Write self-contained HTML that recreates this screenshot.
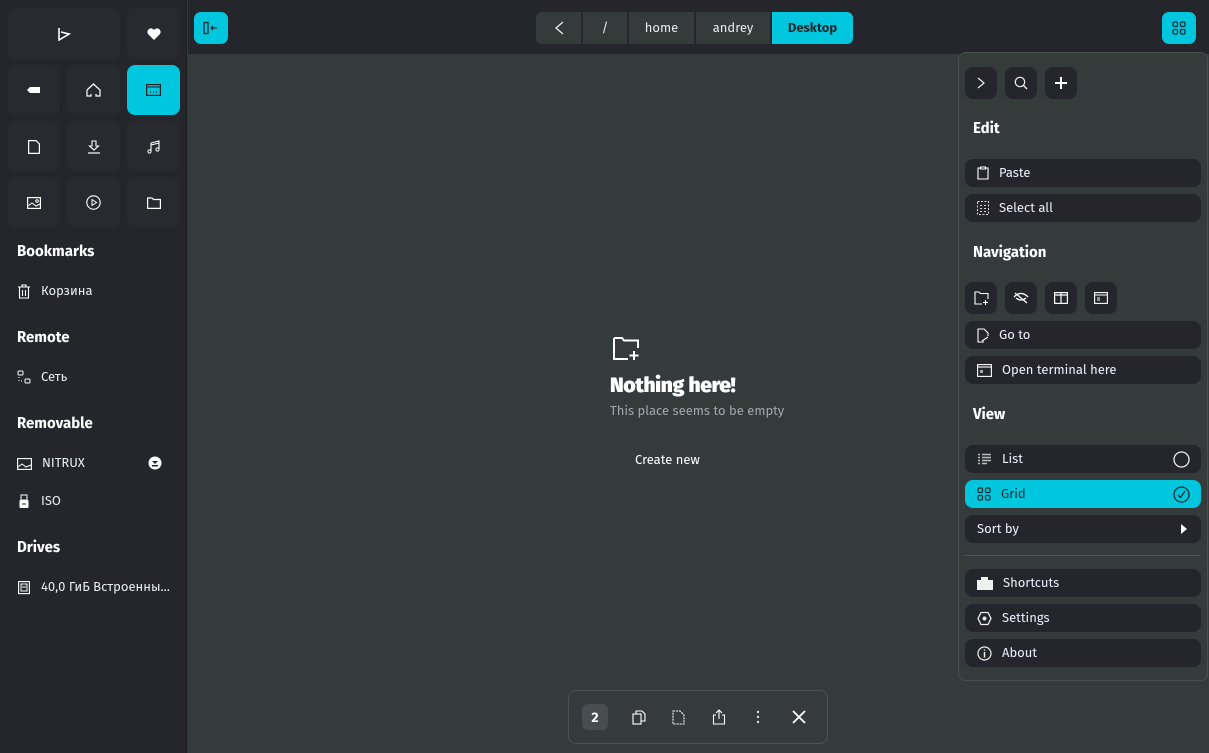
<!DOCTYPE html>
<html><head><meta charset="utf-8"><style>
*{box-sizing:border-box;margin:0;padding:0}
body{width:1209px;height:753px;overflow:hidden;background:#353b3b;font-family:"Fira Sans","Liberation Sans","Noto Sans CJK SC",sans-serif;color:#eef;position:relative;font-size:13px}
.side{position:absolute;left:0;top:0;width:187px;height:753px;background:#25262b;border-right:1px solid #1c1d20}
.tile{position:absolute;background:#292a2f;border-radius:8px;display:flex;align-items:center;justify-content:center}
.tile.on{background:#00c7dd}
svg{display:block}
.h{position:absolute;left:17px;font-weight:bold;font-size:15px;color:#fff}
.it{position:absolute;left:17px;display:flex;align-items:center;gap:10px;font-size:13px;color:#e8eef2}
.top{position:absolute;left:188px;top:0;right:0;height:54px;background:#25262b}
.cbtn{position:absolute;width:34px;height:32px;border-radius:7px;background:#00c7dd;display:flex;align-items:center;justify-content:center}
.crumb{position:absolute;top:12px;height:32px;background:#353b3b;display:flex;align-items:center;justify-content:center;font-size:13px;color:#e6eaec}
.menu{position:absolute;left:958px;top:52px;width:250px;height:629px;background:#353b3b;border:1px solid #4a5050;border-radius:8px}
.sb{position:absolute;width:32px;height:32px;border-radius:8px;background:#25262b;display:flex;align-items:center;justify-content:center}
.mi{position:absolute;left:6px;width:236px;height:28px;border-radius:8px;background:#25262b;display:flex;align-items:center;padding-left:12px;gap:10px;font-size:13px;color:#eef}
.mh{position:absolute;left:14px;font-weight:bold;font-size:15px;color:#fff}
</style></head><body>
<div class="side">
<div class="tile" style="left:8px;top:8px;width:112px;height:52px"><svg width="14" height="14" viewBox="0 0 14 14"><path d="M2 1V13L12 7L4 5" fill="none" stroke="#fff" stroke-width="1.6"/></svg></div>
<div class="tile" style="left:127px;top:8px;width:53px;height:52px"><svg width="14" height="12" viewBox="0 0 14 12"><path d="M7 12L1 6A3 3 0 0 1 7 2A3 3 0 0 1 13 6Z" fill="#fff"/></svg></div>
<div class="tile" style="left:8px;top:65px;width:52px;height:50px"><svg width="14" height="8"><path d="M3 1H13V7H3L0 4Z" fill="#fff"/></svg></div>
<div class="tile" style="left:67px;top:65px;width:53px;height:50px"><svg width="15" height="14"><path d="M1 7L7.5 1L14 7V13H10V11M5 11V13H1V7" fill="none" stroke="#fff" stroke-width="1.2"/></svg></div>
<div class="tile on" style="left:127px;top:65px;width:53px;height:50px"><svg width="15" height="12"><rect x=".6" y=".6" width="13.8" height="10.8" fill="none" stroke="#222" stroke-width="1.2"/><path d="M1 3H14" stroke="#222"/><path d="M4 8H5M7 8H8M10 8H11" stroke="#222" stroke-width="1.5"/></svg></div>
<div class="tile" style="left:8px;top:121px;width:52px;height:51px"><svg width="12" height="14"><path d="M.6.6H8L11.4 4V13.4H.6Z" fill="none" stroke="#fff" stroke-width="1.2"/></svg></div>
<div class="tile" style="left:67px;top:121px;width:53px;height:51px"><svg width="14" height="14"><path d="M5 1H9V6H11.5L7 10L2.5 6H5Z" fill="none" stroke="#fff" stroke-width="1.1"/><path d="M1 13H13" stroke="#fff" stroke-width="1.2"/></svg></div>
<div class="tile" style="left:127px;top:121px;width:53px;height:51px"><svg width="13" height="14"><path d="M4 11V3L12 1V9M4 5L12 3" fill="none" stroke="#fff" stroke-width="1.1"/><circle cx="2.5" cy="11.5" r="1.6" fill="none" stroke="#fff"/><circle cx="10.5" cy="9.5" r="1.6" fill="none" stroke="#fff"/></svg></div>
<div class="tile" style="left:8px;top:177px;width:52px;height:51px"><svg width="14" height="12"><rect x=".6" y=".6" width="12.8" height="10.8" fill="none" stroke="#fff" stroke-width="1.2"/><path d="M1 9L5 6L9 9L13 7" fill="none" stroke="#fff"/><circle cx="10" cy="4" r="1.3" fill="none" stroke="#fff"/></svg></div>
<div class="tile" style="left:67px;top:177px;width:53px;height:51px"><svg width="15" height="15"><circle cx="7.5" cy="7.5" r="6.7" fill="none" stroke="#fff" stroke-width="1.1"/><path d="M6 4.5V10.5L10.5 7.5Z" fill="none" stroke="#fff"/></svg></div>
<div class="tile" style="left:127px;top:177px;width:53px;height:51px"><svg width="14" height="12"><path d="M.6 1H5L6.5 2.5H13.4V11.4H.6Z" fill="none" stroke="#fff" stroke-width="1.2"/></svg></div>
<div class="h" style="top:242px">Bookmarks</div>
<div class="it" style="top:284px"><svg width="14" height="15"><path d="M1 3H13M5 3V1H9V3M2.5 3V14H11.5V3M5.5 6V12M8.5 6V12" fill="none" stroke="#fff" stroke-width="1.1"/></svg>Корзина</div>
<div class="h" style="top:328px">Remote</div>
<div class="it" style="top:370px"><svg width="14" height="15"><rect x="1" y="1" width="5" height="4" rx="1" fill="none" stroke="#fff"/><rect x="8" y="9" width="5" height="4" rx="1" fill="none" stroke="#fff"/><path d="M2 7V8M2 10V11M4 11H5" stroke="#fff"/></svg>Сеть</div>
<div class="h" style="top:414px">Removable</div>
<div class="it" style="top:456px"><svg width="15" height="12"><rect x=".6" y=".6" width="13.8" height="10.8" fill="none" stroke="#fff" stroke-width="1.1"/><path d="M1 9L5 6L9 9L14 7" fill="none" stroke="#fff"/></svg>NITRUX</div>
<svg style="position:absolute;left:148px;top:456px" width="14" height="14"><circle cx="7" cy="7" r="6.5" fill="#fff"/><path d="M4 5H10L7 8Z" fill="#25262b"/><rect x="4" y="9" width="6" height="1.5" fill="#25262b"/></svg>
<div class="it" style="top:494px"><svg width="14" height="15"><rect x="4" y="1" width="6" height="5" fill="none" stroke="#fff"/><rect x="2.5" y="6" width="9" height="8" rx="1" fill="#fff"/><path d="M5 10H9" stroke="#25262b"/></svg>ISO</div>
<div class="h" style="top:538px">Drives</div>
<div class="it" style="top:580px"><svg width="14" height="15"><rect x="1.6" y="1.6" width="10.8" height="12" fill="none" stroke="#fff" stroke-width="1.1"/><rect x="4" y="4" width="6" height="7" fill="none" stroke="#fff"/><path d="M5 7H9" stroke="#fff"/></svg>40,0 ГиБ Встроенны...</div>
</div>
<div class="top"></div>
<div class="cbtn" style="left:194px;top:12px"><svg width="16" height="14"><rect x="1" y="1.5" width="4" height="11" fill="none" stroke="#1b2a30" stroke-width="1.3"/><path d="M8 7H14M8 7L10 5M8 7L10 9" stroke="#1b2a30" stroke-width="1.3"/></svg></div>
<div class="crumb" style="left:536px;width:45px;border-radius:6px 0 0 6px"><svg width="10" height="14"><path d="M9 1L2 7L9 13" fill="none" stroke="#eee" stroke-width="1.3"/></svg></div>
<div class="crumb" style="left:583px;width:44px">/</div>
<div class="crumb" style="left:629px;width:65px">home</div>
<div class="crumb" style="left:696px;width:74px">andrey</div>
<div class="crumb" style="left:772px;width:81px;background:#00c7dd;color:#1d2a2e;font-weight:bold;border-radius:0 6px 6px 0">Desktop</div>
<div class="cbtn" style="left:1162px;top:12px"><svg width="14" height="14" fill="none" stroke="#1b2a30" stroke-width="1.2"><rect x="1" y="1" width="4.5" height="4.5" rx="1.3"/><rect x="8.5" y="1" width="4.5" height="4.5" rx="1.3"/><rect x="1" y="8.5" width="4.5" height="4.5" rx="1.3"/><rect x="8.5" y="8.5" width="4.5" height="4.5" rx="1.3"/></svg></div>

<svg style="position:absolute;left:613px;top:337px" width="27" height="24"><path d="M1 1H9L11 3.5H25V11M1 1V22H15" fill="none" stroke="#fff" stroke-width="2"/><path d="M21 14V23M16.5 18.5H25.5" stroke="#fff" stroke-width="2"/></svg>
<div style="position:absolute;left:610px;top:372px;font-weight:900;font-size:21px;color:#fff;letter-spacing:-0.3px">Nothing here!</div>
<div style="position:absolute;left:610px;top:404px;font-size:13px;color:#a0a8ae">This place seems to be empty</div>
<div style="position:absolute;left:635px;top:453px;font-size:13px;color:#fff">Create new</div>

<div style="position:absolute;left:568px;top:690px;width:260px;height:54px;border:1px solid #4c5252;border-radius:8px;background:#353b3b"></div>
<div style="position:absolute;left:582px;top:704px;width:26px;height:26px;border-radius:6px;background:#484e4f;color:#fff;font-weight:bold;font-size:14px;display:flex;align-items:center;justify-content:center">2</div>
<svg style="position:absolute;left:632px;top:710px" width="14" height="15" fill="none" stroke="#fff" stroke-width="1.1"><rect x="1" y="4" width="8" height="10"/><path d="M4 4V1H10L13 4V11H9"/></svg>
<svg style="position:absolute;left:672px;top:710px" width="14" height="15" fill="none" stroke="#fff" stroke-width="1.1" stroke-dasharray="2 1"><path d="M1 1H8L12 5V14H1Z"/></svg>
<svg style="position:absolute;left:712px;top:709px" width="14" height="16" fill="none" stroke="#fff" stroke-width="1.1"><path d="M4 6H1.5V15H12.5V6H10"/><path d="M7 10V2M4 4L7 1L10 4" /></svg>
<svg style="position:absolute;left:756px;top:710px" width="4" height="14"><circle cx="2" cy="2" r="1.2" fill="#ddd"/><circle cx="2" cy="7" r="1.2" fill="#ddd"/><circle cx="2" cy="12" r="1.2" fill="#ddd"/></svg>
<svg style="position:absolute;left:792px;top:710px" width="14" height="14"><path d="M1 1L13 13M13 1L1 13" stroke="#fff" stroke-width="1.8"/></svg>

<div class="menu">
<div class="sb" style="left:6px;top:14px"><svg width="8" height="12"><path d="M1 1L7 6L1 11" fill="none" stroke="#eee" stroke-width="1.2"/></svg></div>
<div class="sb" style="left:46px;top:14px"><svg width="14" height="14"><circle cx="6" cy="6" r="4.7" fill="none" stroke="#eee" stroke-width="1.2"/><path d="M9.5 9.5L13 13" stroke="#eee" stroke-width="1.3"/></svg></div>
<div class="sb" style="left:86px;top:14px"><svg width="12" height="12"><path d="M6 0V12M0 6H12" stroke="#fff" stroke-width="2"/></svg></div>
<div class="mh" style="top:66px">Edit</div>
<div class="mi" style="top:106px"><svg width="12" height="14" fill="none" stroke="#fff" stroke-width="1.1"><path d="M3 2H1V13H11V2H9M3.5 1H8.5V3H3.5Z"/></svg>Paste</div>
<div class="mi" style="top:141px"><svg width="12" height="14"><rect x=".5" y=".5" width="11" height="13" fill="none" stroke="#ddd" stroke-dasharray="2 1.5"/><path d="M4 4V5M8 4V5M4 7V8M8 7V8M4 10V11M8 10V11" stroke="#fff" stroke-width="1.6"/></svg>Select all</div>
<div class="mh" style="top:190px">Navigation</div>
<div class="sb" style="left:6px;top:229px"><svg width="15" height="14" fill="none" stroke="#fff" stroke-width="1.1"><path d="M8 13H1V1H5L6.5 2.5H14V8"/><path d="M11.5 9V14M9 11.5H14"/></svg></div>
<div class="sb" style="left:46px;top:229px"><svg width="16" height="12" fill="none" stroke="#fff" stroke-width="1.3"><path d="M1 5Q8 -2 15 5M3 6Q8 10 13 6M2 1L14 11"/></svg></div>
<div class="sb" style="left:86px;top:229px"><svg width="14" height="12" fill="none" stroke="#fff" stroke-width="1.2"><rect x=".6" y=".6" width="12.8" height="10.8"/><path d="M7 1V11M1 3H13"/></svg></div>
<div class="sb" style="left:126px;top:229px"><svg width="14" height="12" fill="none" stroke="#fff" stroke-width="1.1"><rect x=".6" y=".6" width="12.8" height="10.8"/><path d="M1 3H13M3 6H6M3 8H6"/></svg></div>
<div class="mi" style="top:268px"><svg width="12" height="15" fill="none" stroke="#fff" stroke-width="1.1"><path d="M7 14H1V1H7L11 5V8M5 13L11 9"/></svg>Go to</div>
<div class="mi" style="top:303px"><svg width="15" height="13" fill="none" stroke="#fff" stroke-width="1.1"><rect x=".6" y=".6" width="13.8" height="11.8"/><path d="M1 3H14"/><rect x="3" y="6" width="3" height="3" fill="#aaa" stroke="none"/></svg>Open terminal here</div>
<div class="mh" style="top:352px">View</div>
<div class="mi" style="top:392px"><svg width="15" height="12" stroke="#bbb" stroke-width="1.5"><path d="M1 1.5H3M5 1.5H14M1 4.5H3M5 4.5H14M1 7.5H3M5 7.5H14M1 10.5H3M5 10.5H10"/></svg>List<svg style="position:absolute;right:11px" width="17" height="17"><circle cx="8.5" cy="8.5" r="7.5" fill="none" stroke="#eee" stroke-width="1.3"/></svg></div>
<div class="mi" style="top:427px;background:#00c7dd;color:#1b2a30"><svg width="14" height="14" fill="none" stroke="#1b2a30" stroke-width="1.2"><rect x="1" y="1" width="4.5" height="4.5" rx="1.3"/><rect x="8.5" y="1" width="4.5" height="4.5" rx="1.3"/><rect x="1" y="8.5" width="4.5" height="4.5" rx="1.3"/><rect x="8.5" y="8.5" width="4.5" height="4.5" rx="1.3"/></svg>Grid<svg style="position:absolute;right:11px" width="17" height="17" fill="none" stroke="#1b2a30" stroke-width="1.3"><circle cx="8.5" cy="8.5" r="7.5"/><path d="M5 9L7.5 11.5L12 5"/></svg></div>
<div class="mi" style="top:462px">Sort by<svg style="position:absolute;right:14px" width="6" height="10"><path d="M0 0L6 5L0 10Z" fill="#fff"/></svg></div>
<div style="position:absolute;left:6px;top:502px;width:236px;height:1px;background:#4c5353"></div>
<div class="mi" style="top:516px"><svg width="16" height="13"><path d="M4 0H11V3H16V13H0V3H4Z" fill="#f0f0f0"/></svg>Shortcuts</div>
<div class="mi" style="top:551px"><svg width="15" height="15" fill="none" stroke="#eee" stroke-width="1.3"><path d="M4 1.5H11L14 7.5L11 13.5H4L1 7.5Z"/><circle cx="7.5" cy="7.5" r="1.3" fill="#eee"/></svg>Settings</div>
<div class="mi" style="top:586px"><svg width="15" height="15" fill="none" stroke="#eee" stroke-width="1.2"><circle cx="7.5" cy="7.5" r="6.5"/><path d="M7.5 6V11.5M7.5 3.5V4.8" stroke-width="1.5"/></svg>About</div>
</div>
</body></html>
